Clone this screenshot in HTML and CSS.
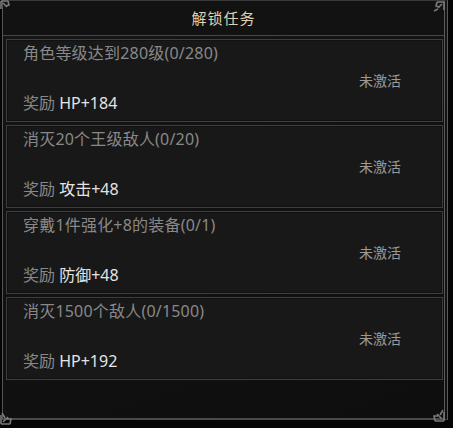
FILE: index.html
```html
<!DOCTYPE html>
<html lang="zh">
  <head>
    <meta charset="UTF-8" />
    <meta name="viewport" content="width=device-width, initial-scale=1.0" />
    <title>解锁任务</title>
    <link rel="stylesheet" href="styles.css">
  </head>
  <body>
    <div class="frame">
      <div class="panel">
        <div class="header">解锁任务</div>

        <div class="tasks">
          <div class="task">
            <div class="task-name">角色等级达到280级(0/280)</div>
            <div class="task-status">未激活</div>
            <div class="task-reward">奖励 <span>HP+184</span></div>
          </div>
          <div class="task">
            <div class="task-name">消灭20个王级敌人(0/20)</div>
            <div class="task-status">未激活</div>
            <div class="task-reward">奖励 <span>攻击+48</span></div>
          </div>
          <div class="task">
            <div class="task-name">穿戴1件强化+8的装备(0/1)</div>
            <div class="task-status">未激活</div>
            <div class="task-reward">奖励 <span>防御+48</span></div>
          </div>
          <div class="task">
            <div class="task-name">消灭1500个敌人(0/1500)</div>
            <div class="task-status">未激活</div>
            <div class="task-reward">奖励 <span>HP+192</span></div>
          </div>
        </div>
      </div>

      <!-- corner ornaments -->
      <svg class="corner corner-tl" width="14" height="14" viewBox="0 0 14 14">
        <path d="M1 1 L8 1 M1 1 L1 9 M3 3 L7 7 M8 1 L9 5 L6 6" stroke="#7a7a7a" stroke-width="1.6" fill="none"/>
      </svg>
      <svg class="corner corner-tr" width="14" height="14" viewBox="0 0 14 14">
        <path d="M13 1 L6 1 M13 1 L13 9 M11 3 L7 7 M6 1 L5 5 L8 6 M3 10 L7 8" stroke="#7a7a7a" stroke-width="1.6" fill="none"/>
      </svg>
      <svg class="corner corner-bl" width="16" height="16" viewBox="0 0 16 16">
        <path d="M1 15 L10 15 M1 15 L1 6 M3 13 L8 8 M10 15 L11 10 L7 10 M2 4 L5 9" stroke="#7a7a7a" stroke-width="1.6" fill="none"/>
      </svg>
      <svg class="corner corner-br" width="16" height="16" viewBox="0 0 16 16">
        <path d="M15 15 L6 15 M15 15 L15 6 M13 13 L8 8 M6 15 L5 10 L9 10 M14 4 L11 9" stroke="#7a7a7a" stroke-width="1.6" fill="none"/>
      </svg>
    </div>
  </body>
</html>
```

FILE: styles.css
```css
body {
  margin: 0;
  background: #000;
  font-family: "Noto Sans", "Noto Sans CJK SC", sans-serif;
}

.frame {
  position: relative;
  width: 453px;
  height: 428px;
  background: #050505;
  overflow: hidden;
}

.panel {
  box-sizing: border-box;
  margin-left: 2px;
  width: 446px;
  height: 420px;
  background: linear-gradient(160deg, #151515, #0e0e0e);
  border-top: 1px solid #3a3a3a;
  border-left: 1px solid #555;
  border-right: 4px double #5a5a5a;
  border-bottom: 2px solid #4a4a4a;
}

.header {
  height: 34px;
  line-height: 34px;
  text-align: center;
  color: #ddd3b0;
  font-size: 15px;
  letter-spacing: 1px;
  background: #121212;
  border-bottom: 1px solid #414a41;
}

.tasks {
  display: flex;
  flex-direction: column;
  gap: 3px;
  padding: 3px 1px 0 3px;
}

.task {
  box-sizing: border-box;
  height: 83px;
  padding: 2px 16px 0;
  background: #181818;
  border: 1px solid #3a403a;
  box-shadow: inset 0 0 0 1px #111;
}

.task-name {
  height: 22px;
  line-height: 22px;
  font-size: 16px;
  letter-spacing: 0.2px;
  color: #888;
}

.task-status {
  margin-top: 6px;
  height: 22px;
  line-height: 22px;
  padding-right: 25px;
  text-align: right;
  font-size: 14px;
  color: #9a9a9a;
}

.task-reward {
  height: 22px;
  line-height: 22px;
  font-size: 16px;
  color: #888;
}

.task-reward span {
  color: #e4e4e4;
}

.corner {
  position: absolute;
}

.corner-tl {
  left: 0;
  top: 0;
}

.corner-tr {
  right: 8px;
  top: 1px;
}

.corner-bl {
  left: 0;
  bottom: 3px;
}

.corner-br {
  right: 8px;
  bottom: 6px;
}
```
